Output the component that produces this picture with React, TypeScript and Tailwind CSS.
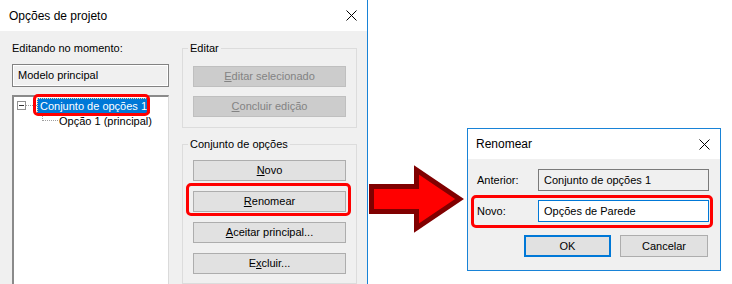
import React from "react";

const FONT = "font-['Liberation_Sans',Arial,sans-serif]";

function CloseX() {
  return (
    <svg width="11" height="11" viewBox="0 0 11 11" className="shrink-0">
      <path d="M0.5 0.5L10.5 10.5M10.5 0.5L0.5 10.5" stroke="#000" strokeWidth="1" />
    </svg>
  );
}

function WinButton({
  children,
  disabled,
  className = "",
}: {
  children: React.ReactNode;
  disabled?: boolean;
  className?: string;
}) {
  return (
    <div
      className={
        disabled
          ? `w-[153px] h-[21px] flex items-center justify-center border border-[#bfbfbf] bg-[#cccccc] text-[#838383] text-[11px] ${className}`
          : `w-[153px] h-[21px] flex items-center justify-center border border-[#adadad] bg-[#e1e1e1] text-black text-[11px] ${className}`
      }
    >
      {children}
    </div>
  );
}

function U({ children }: { children: React.ReactNode }) {
  return <span className="underline underline-offset-[1px]">{children}</span>;
}

function ProjectOptions() {
  return (
    <div className="w-[368px] h-[284px] shrink-0 flex flex-col border-r border-[#1883d7] bg-white">
      {/* title bar */}
      <div className="h-[31px] shrink-0 flex items-center justify-between pl-[9px] pr-[10px] bg-white">
        <span className="text-[12px] text-black">Opções de projeto</span>
        <CloseX />
      </div>

      {/* body */}
      <div className="flex-1 bg-[#f0f0f0] flex pl-[12px] pt-[11px] overflow-hidden">
        {/* left column */}
        <div className="w-[157px] shrink-0 flex flex-col">
          <div className="h-[13px] leading-[13px] text-[11px] text-black">Editando no momento:</div>
          <div className="mt-[9px] h-[24px] border border-[#828282] shadow-[inset_1px_1px_0_#ffffff,inset_-1px_-1px_0_#ffffff] flex items-center pl-[5px] text-[11px] text-black">
            Modelo principal
          </div>
          <div className="mt-[8px] h-[200px] bg-white border-t-2 border-l-2 border-r border-[#8a8a8a] border-r-[#dadada] pt-[1px] pl-[3px] text-[11px]">
            {/* node 1 */}
            <div className="relative h-[16px] flex items-center">
              <div className="w-[9px] h-[9px] border border-[#919191] bg-white flex items-center justify-center">
                <div className="w-[5px] h-px bg-[#333]" />
              </div>
              <div className="w-[11px] border-t border-dotted border-[#a0a0a0]" />
              <span className="h-[16px] flex items-center px-[3px] bg-[#0078d7] text-white outline outline-1 outline-dotted outline-[#f4d9a0] -outline-offset-1">
                Conjunto de opções 1
              </span>
              <div className="absolute left-[16px] top-[-4px] w-[117px] h-[22px] border-[3px] border-[#ff0000] rounded-[5px]" />
            </div>
            {/* node 2 */}
            <div className="h-[15px] flex items-start">
              <div className="ml-[25px] w-[16px] h-[7px] border-l border-b border-dotted border-[#a0a0a0]" />
              <span className="ml-[1px] leading-[14px] text-black">Opção 1 (principal)</span>
            </div>
          </div>
        </div>

        {/* right column */}
        <div className="ml-[13px] w-[175px] shrink-0 flex flex-col">
          <fieldset className="border border-[#dcdcdc] px-[10px] pb-[10px]">
            <legend className="-ml-[5px] px-[2px] h-[13px] leading-[13px] text-[11px] text-black">Editar</legend>
            <div className="mt-[11px] flex flex-col gap-[9px]">
              <WinButton disabled>
                <U>E</U>ditar selecionado
              </WinButton>
              <WinButton disabled>
                <U>C</U>oncluir edição
              </WinButton>
            </div>
          </fieldset>

          <fieldset className="mt-[10px] border border-[#dcdcdc] px-[10px] pb-[9px]">
            <legend className="-ml-[5px] px-[2px] h-[13px] leading-[13px] text-[11px] text-black">Conjunto de opções</legend>
            <div className="mt-[9px] flex flex-col gap-[10px]">
              <WinButton>
                <U>N</U>ovo
              </WinButton>
              <div className="relative">
                <WinButton>
                  <U>R</U>enomear
                </WinButton>
                <div className="absolute left-[-7px] right-[-5px] top-[-8px] bottom-[-4px] border-[3px] border-[#ff0000] rounded-[5px]" />
              </div>
              <WinButton>
                <U>A</U>ceitar principal...
              </WinButton>
              <WinButton>
                E<U>x</U>cluir...
              </WinButton>
            </div>
          </fieldset>
        </div>
      </div>
    </div>
  );
}

function Arrow() {
  return (
    <svg width="99" height="284" viewBox="0 0 99 284" className="shrink-0">
      <path
        d="M3.5 186.5H48.5V170L91.5 199L48.5 228V211.5H3.5Z"
        fill="#ff0000"
        stroke="#800000"
        strokeWidth="5"
        strokeLinejoin="miter"
      />
    </svg>
  );
}

function RenameDialog() {
  return (
    <div className="mt-[128px] w-[254px] h-[143px] shrink-0 flex flex-col border border-[#1883d7] bg-white">
      <div className="h-[30px] shrink-0 flex items-center justify-between pl-[8px] pr-[10px]">
        <span className="text-[12px] text-black">Renomear</span>
        <CloseX />
      </div>
      <div className="flex-1 bg-[#f0f0f0] pt-[10px] flex flex-col text-[11px] text-black">
        <div className="flex items-center pl-[9px]">
          <span className="w-[61px]">Anterior:</span>
          <div className="w-[171px] h-[22px] border border-[#7a7a7a] flex items-center pl-[5px]">
            Conjunto de opções 1
          </div>
        </div>
        <div className="relative mt-[9px] flex items-center pl-[9px]">
          <span className="w-[61px]">Novo:</span>
          <div className="w-[171px] h-[22px] border border-[#0078d7] bg-white flex items-center pl-[5px]">
            Opções de Parede
          </div>
          <div className="absolute left-[3px] right-[7px] top-[-5px] bottom-[-6px] border-[3px] border-[#ff0000] rounded-[5px]" />
        </div>
        <div className="mt-[13px] flex justify-end gap-[9px] pr-[12px]">
          <div className="w-[87px] h-[22px] border-2 border-[#0078d7] bg-[#e1e1e1] flex items-center justify-center">OK</div>
          <div className="w-[88px] h-[22px] border border-[#adadad] bg-[#e1e1e1] flex items-center justify-center">Cancelar</div>
        </div>
      </div>
    </div>
  );
}

export default function App() {
  return (
    <div className={`w-[732px] h-[284px] bg-white flex items-start overflow-hidden ${FONT}`}>
      <ProjectOptions />
      <Arrow />
      <RenameDialog />
    </div>
  );
}
